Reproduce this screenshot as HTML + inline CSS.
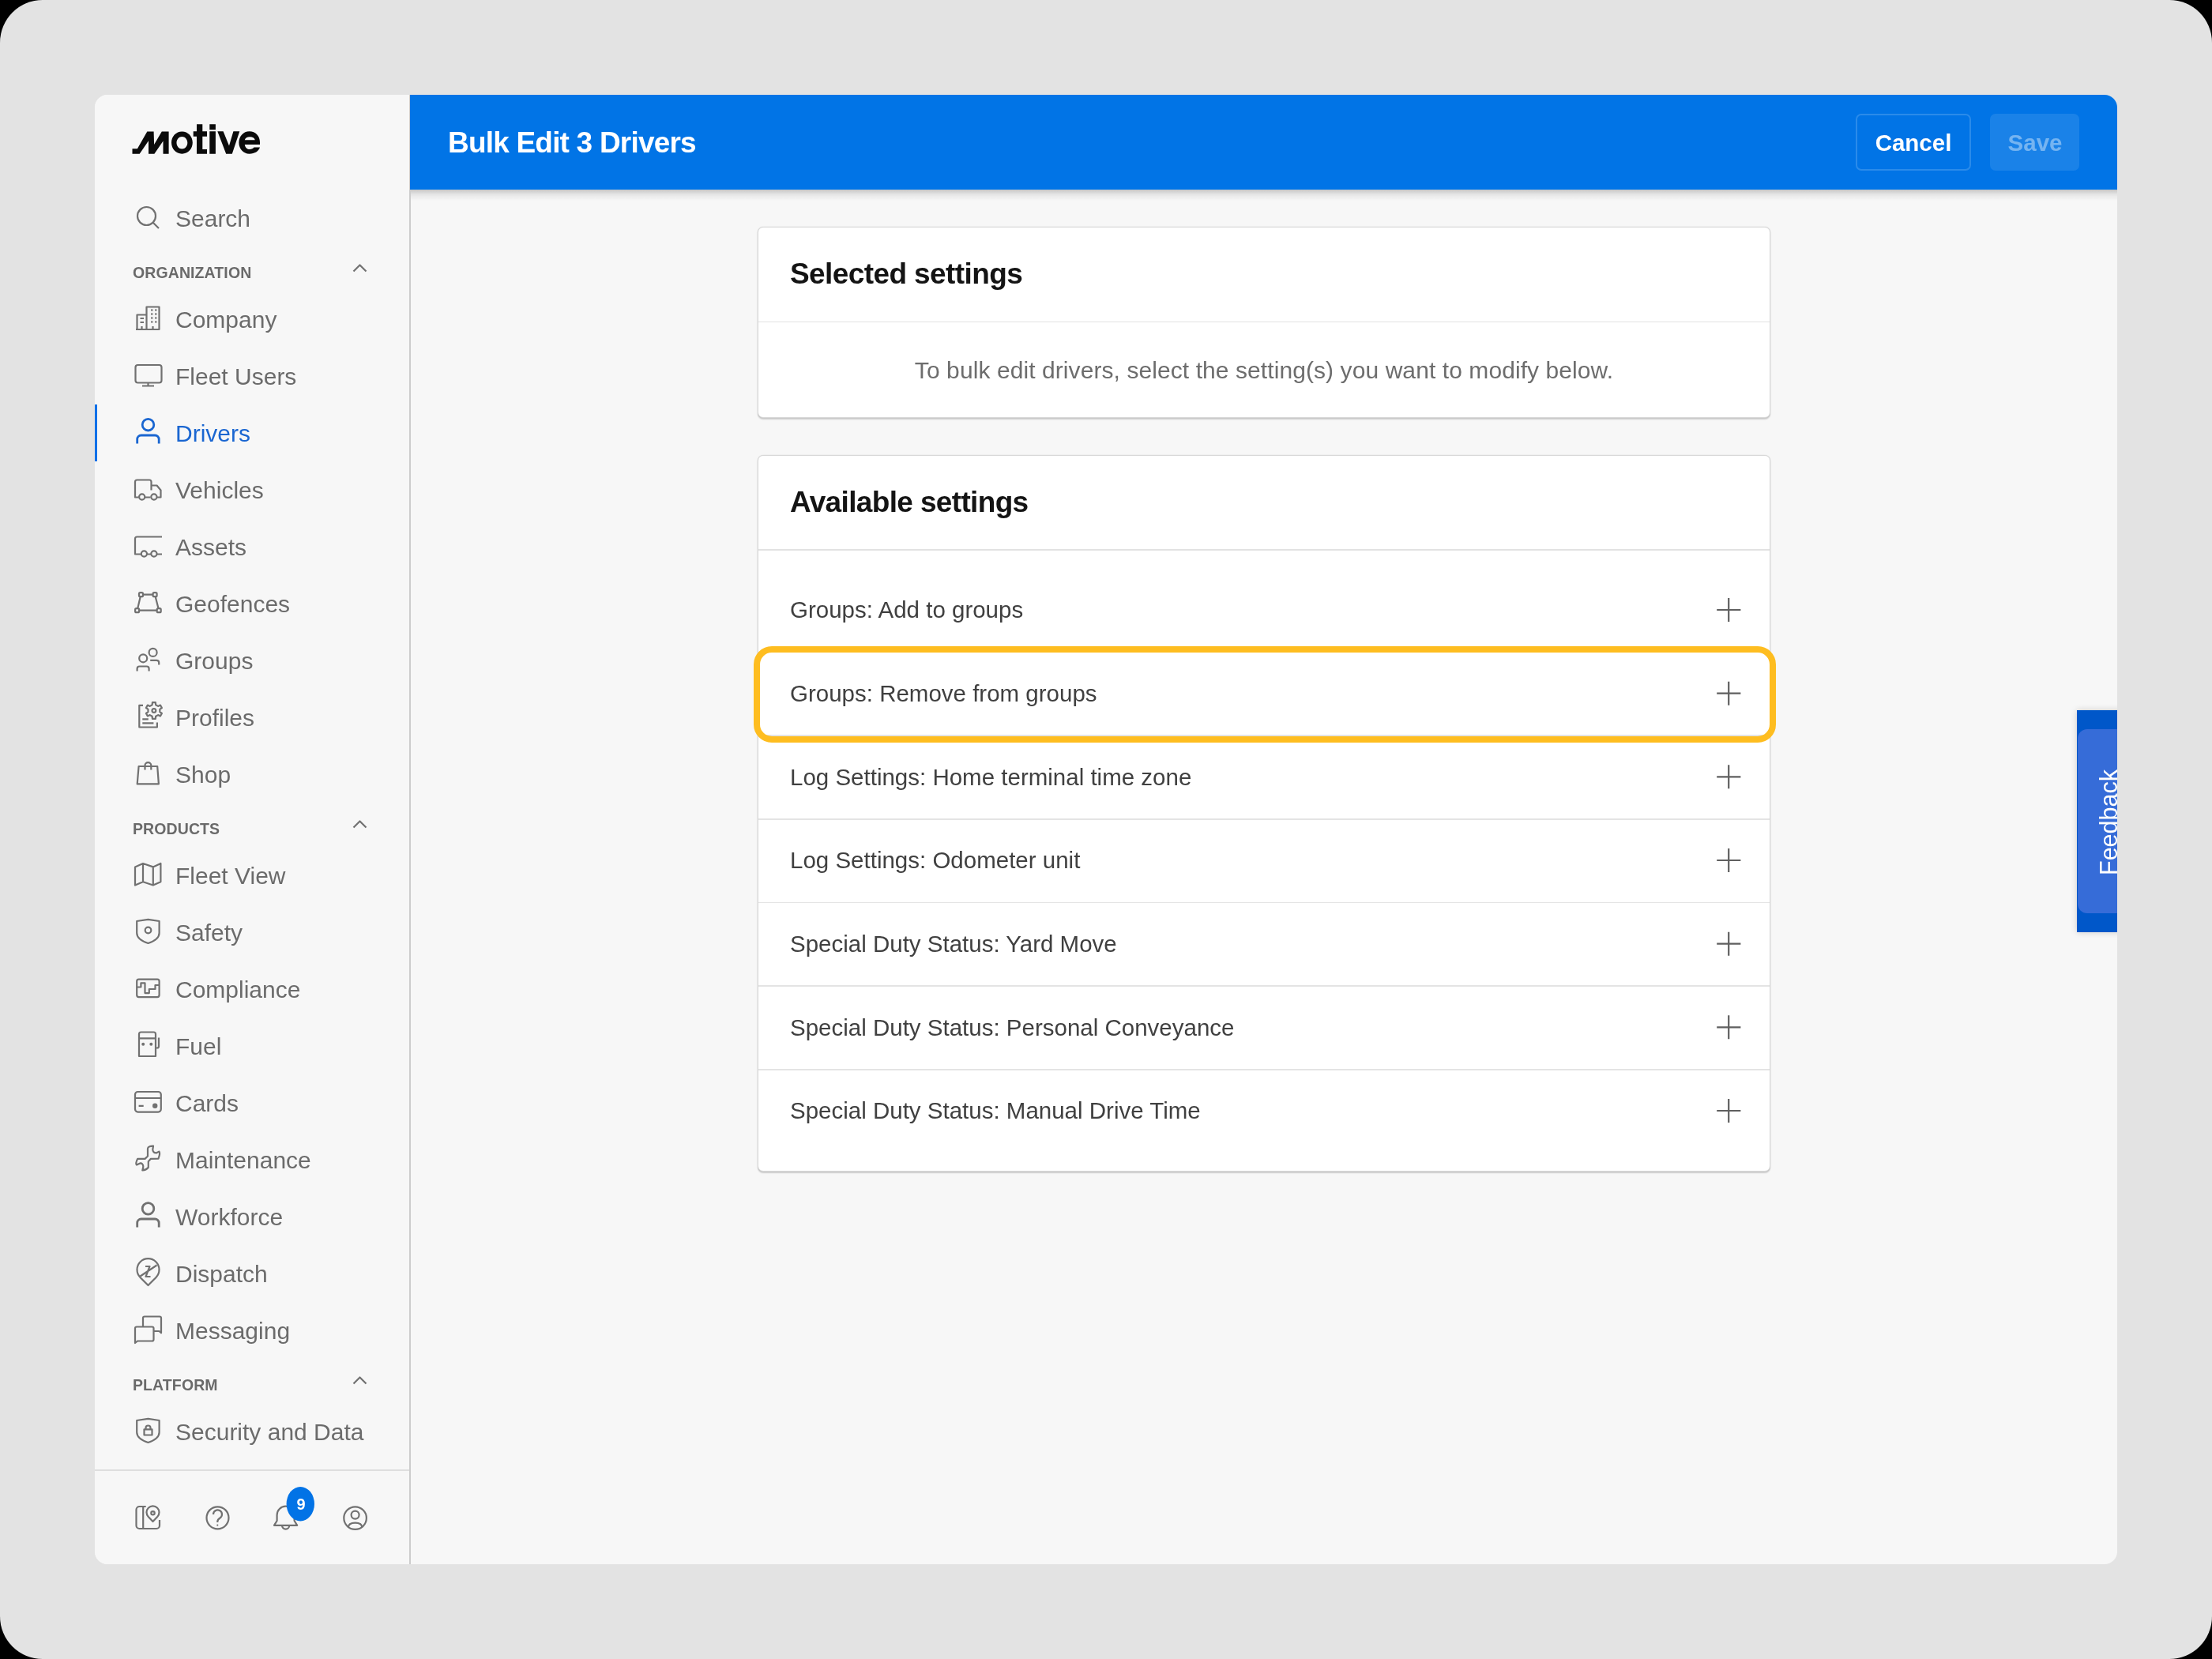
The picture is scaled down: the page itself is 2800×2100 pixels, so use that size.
<!DOCTYPE html>
<html><head><meta charset="utf-8">
<style>
html,body{margin:0;padding:0;}
body{width:2800px;height:2100px;position:relative;overflow:hidden;background:#000;font-family:"Liberation Sans",sans-serif;}
.t{position:absolute;white-space:nowrap;line-height:0;-webkit-font-smoothing:antialiased;will-change:transform;}
#frame{position:absolute;left:0;top:0;width:2800px;height:2100px;background:#e3e3e3;border-radius:54px;}
#win{position:absolute;left:120px;top:120px;width:2560px;height:1860px;border-radius:16px;overflow:hidden;background:#f7f7f7;}
#side{position:absolute;left:0;top:0;width:398px;height:1860px;background:#f7f7f7;border-right:2px solid #cdcdcd;}
#hdr{position:absolute;left:399px;top:0;width:2161px;height:120px;background:#0174e6;}
#hsh{position:absolute;left:400px;top:120px;width:2160px;height:14px;background:linear-gradient(rgba(0,0,0,0.2),rgba(0,0,0,0.07) 45%,rgba(0,0,0,0));}
.card{position:absolute;background:#fff;border:1.5px solid #d8d8d8;border-radius:7px;box-shadow:0 1.5px 1.5px rgba(0,0,0,0.17),0 0 1.5px rgba(0,0,0,0.12);box-sizing:border-box;}
</style></head><body>
<div id="frame"></div>
<div id="win">
  <div id="side"></div>
  <div style="position:absolute;left:0;top:1740px;width:398px;height:2px;background:#dedede"></div>
  <div style="position:absolute;left:0;top:392px;width:3px;height:72px;background:#0a70e8"></div>
  <div id="hdr"></div><div id="hsh"></div>
  <div style="position:absolute;left:2229px;top:24px;width:146px;height:72px;box-sizing:border-box;border:2px solid rgba(255,255,255,0.17);border-radius:7px;"></div>
  <div style="position:absolute;left:2399px;top:24px;width:113px;height:72px;background:rgba(255,255,255,0.1);border-radius:7px;"></div>
  <div style="position:absolute;left:2509px;top:779px;width:60px;height:281px;background:#0057c9;box-shadow:0 0 8px rgba(0,0,0,0.18)"></div>
  <div style="position:absolute;left:2510px;top:803px;width:60px;height:233px;background:#366cd8;border-radius:12px 0 0 12px;"></div>
</div>
<div class="card" style="left:959px;top:287px;width:1282px;height:242px;"></div>
<div style="position:absolute;left:960px;top:406.5px;width:1280px;height:1.5px;background:#e2e2e2"></div>
<div class="card" style="left:959px;top:576px;width:1282px;height:907px;"></div>
<div style="position:absolute;left:960px;top:695px;width:1280px;height:1.5px;background:#e2e2e2"></div>
<div style="position:absolute;left:960px;top:824.67px;width:1280px;height:1.5px;background:#e4e4e4"></div>
<div style="position:absolute;left:960px;top:930.34px;width:1280px;height:1.5px;background:#e4e4e4"></div>
<div style="position:absolute;left:960px;top:1036.01px;width:1280px;height:1.5px;background:#e4e4e4"></div>
<div style="position:absolute;left:960px;top:1141.68px;width:1280px;height:1.5px;background:#e4e4e4"></div>
<div style="position:absolute;left:960px;top:1247.35px;width:1280px;height:1.5px;background:#e4e4e4"></div>
<div style="position:absolute;left:960px;top:1353.02px;width:1280px;height:1.5px;background:#e4e4e4"></div>
<div style="position:absolute;left:954px;top:818px;width:1294px;height:122px;box-sizing:border-box;border:8px solid #febd20;border-radius:23px;"></div>
<svg width="2800" height="2100" style="position:absolute;left:0;top:0">
<g fill="#0b0b0b">
<path d="M167.5 194.7 V188.3 H173.9 L186.3 166.6 H194.6 L195.1 183 L204.8 166.6 H213.6 V194.7 H206.5 V178.5 L195.4 194.7 H188 V178.2 L176.7 194.7 Z"/>
<path fill-rule="evenodd" d="M230.4 166.5 C238 166.5 243.8 172.8 243.8 180.6 C243.8 188.4 238 194.7 230.4 194.7 C222.8 194.7 217 188.4 217 180.6 C217 172.8 222.8 166.5 230.4 166.5 Z M230.4 173 C226.5 173 223.5 176.4 223.5 180.75 C223.5 185.1 226.5 188.5 230.4 188.5 C234.3 188.5 237.3 185.1 237.3 180.75 C237.3 176.4 234.3 173 230.4 173 Z"/>
<path d="M249 157.3 H256.3 V166.2 H262 V172.7 H256.3 V189 H262 V194.7 H249 V172.7 H244.7 V166.2 H249 Z"/>
<path d="M265.3 157.3 H272.9 V164.3 H265.3 Z M265.3 166.2 H272.9 V194.7 H265.3 Z"/>
<path d="M275.3 166.2 H282.6 L290 184.4 L295.4 166.2 H303.3 L293.8 194.7 H286.2 Z"/>
<path fill-rule="evenodd" d="M329 183 H309.8 C310.5 187 313 189 316 189 C318.5 189 320.5 188 321.5 186.6 H329 C327.5 191.5 322.5 194.7 315.7 194.7 C308 194.7 302.4 188.5 302.4 180.5 C302.4 172.5 308 166.2 315.7 166.2 C323.5 166.2 329 172 329 180 Z M309.8 177.3 C310.5 174.5 312.8 173.3 316.3 173.3 C319.8 173.3 322.2 174.8 322.8 177.3 Z"/>
</g>
<g fill="none" stroke="#717171" stroke-width="2.2" stroke-linecap="butt" stroke-linejoin="round" stroke-width="2.6"><circle cx="185.5" cy="273.5" r="11.5"/><line x1="194" y1="282" x2="201" y2="289"/></g>
<polyline fill="none" stroke="#717171" stroke-width="2.2" stroke-linecap="butt" stroke-linejoin="round" points="447.5,343.5 455.5,335.5 463.5,343.5"/>
<polyline fill="none" stroke="#717171" stroke-width="2.2" stroke-linecap="butt" stroke-linejoin="round" points="447.5,1047.5 455.5,1039.5 463.5,1047.5"/>
<polyline fill="none" stroke="#717171" stroke-width="2.2" stroke-linecap="butt" stroke-linejoin="round" points="447.5,1751.5 455.5,1743.5 463.5,1751.5"/>
<g fill="none" stroke="#717171" stroke-width="2.2" stroke-linecap="butt" stroke-linejoin="round" stroke-width="2.5" stroke-linejoin="miter"><path d="M173.5 417 V398.5 H185.5 M185.5 417 V388.5 H201.5 V417 H172"/><path d="M191 392.5 h2.5 M196 392.5 h2.5 M191 397.5 h2.5 M196 397.5 h2.5 M191 402.5 h2.5 M196 402.5 h2.5 M191 407.5 h2.5 M196 407.5 h2.5 M177.5 403 h4.5 M177.5 408 h4.5 M179.5 413 v4 M193.5 413 v4"/></g>
<g fill="none" stroke="#717171" stroke-width="2.2" stroke-linecap="butt" stroke-linejoin="round" stroke-width="2.2"><rect x="171.5" y="462" width="33" height="22.5" rx="3"/><path d="M187.5 484.5 v4 M180 488.5 h15"/></g>
<g fill="none" stroke="#1a66d1" stroke-width="2.8"><circle cx="187.5" cy="537.7" r="7.3"/><path d="M173.7 561.6 V556 a5 5 0 0 1 5 -5 H196.2 a5 5 0 0 1 5 5 V561.6"/></g>
<g fill="none" stroke="#717171" stroke-width="2.2" stroke-linecap="butt" stroke-linejoin="round" stroke-width="2.2"><path d="M175.5 629.5 H171 V610 a2.5 2.5 0 0 1 2.5 -2.5 H189 a2.5 2.5 0 0 1 2.5 2.5 V620.5 M191.5 614.5 H198.5 L203.5 620.5 V629.5 H199 M184 629.5 H190.5"/><circle cx="179.7" cy="629" r="3.6"/><circle cx="194.9" cy="629" r="3.6"/></g>
<g fill="none" stroke="#717171" stroke-width="2.2" stroke-linecap="butt" stroke-linejoin="round" stroke-width="2.2"><path d="M205 679.5 H173.5 a2.5 2.5 0 0 0 -2.5 2.5 V701.5 H178.5 M186.5 701.5 H191 M198.5 701.5 H205"/><circle cx="182.4" cy="701" r="3.6"/><circle cx="194.9" cy="701" r="3.6"/></g>
<g fill="none" stroke="#717171" stroke-width="2.2" stroke-linecap="butt" stroke-linejoin="round" stroke-width="2"><path d="M178.4 752.6 H196 L201.2 772.7 H173.6 Z"/><rect x="176" y="750.2" width="5" height="5" rx="1.5" fill="#f7f7f7"/><rect x="193.6" y="750.2" width="5" height="5" rx="1.5" fill="#f7f7f7"/><rect x="171.1" y="770.2" width="5" height="5" rx="1.5" fill="#f7f7f7"/><rect x="198.7" y="770.2" width="5" height="5" rx="1.5" fill="#f7f7f7"/></g>
<g fill="none" stroke="#717171" stroke-width="2.2" stroke-linecap="butt" stroke-linejoin="round" stroke-width="2.3"><circle cx="181.2" cy="833.3" r="5"/><circle cx="193.6" cy="825.9" r="5"/><path d="M173.6 849.5 V846.5 a3 3 0 0 1 3 -3 H185.6 a3 3 0 0 1 3 3 V849.5 M190.2 835.8 H198.2 a3 3 0 0 1 3 3 V841.6"/></g>
<g fill="none" stroke="#717171" stroke-width="2.2" stroke-linecap="butt" stroke-linejoin="round" stroke-width="2.2" stroke-linejoin="miter"><path d="M181 892.8 H176.3 V920.5 H198.9 V914.5 M180.3 910.3 H187.8 M180.3 915.4 H194.4"/><path d="M192.65 892.24 L192.94 889.08 L196.86 889.08 L197.15 892.24 L200.06 893.92 L202.94 892.59 L204.90 895.99 L202.31 897.81 L202.31 901.19 L204.90 903.01 L202.94 906.41 L200.06 905.08 L197.15 906.76 L196.86 909.92 L192.94 909.92 L192.65 906.76 L189.74 905.08 L186.86 906.41 L184.90 903.01 L187.49 901.19 L187.49 897.81 L184.90 895.99 L186.86 892.59 L189.74 893.92 Z"/><circle cx="194.9" cy="899.5" r="2.4"/></g>
<g fill="none" stroke="#717171" stroke-width="2.2" stroke-linecap="butt" stroke-linejoin="round" stroke-width="2.2"><path d="M175.6 970 H199.2 L200.9 992.4 H173.7 Z"/><path d="M183.5 974.4 V969 a3.9 3.9 0 0 1 7.8 0 V974.4"/></g>
<g fill="none" stroke="#717171" stroke-width="2.2" stroke-linecap="butt" stroke-linejoin="round" stroke-width="2"><path d="M171 1097.4 L181 1093 L193.8 1097.4 L203.4 1093 V1116.2 L193.8 1120.5 L181 1116.2 L171 1120.5 Z M181 1093 V1116.2 M193.8 1097.4 V1120.5"/></g>
<g fill="none" stroke="#717171" stroke-width="2.2" stroke-linecap="butt" stroke-linejoin="round" stroke-width="2.2"><path d="M187.5 1163.8 L173.2 1166 V1181 C173.2 1187 180 1191.5 187.5 1194 C195 1191.5 201.6 1187 201.6 1181 V1166 Z"/><circle cx="187.5" cy="1177.5" r="3.8"/></g>
<g fill="none" stroke="#717171" stroke-width="2.2" stroke-linecap="butt" stroke-linejoin="round" stroke-width="2.2" stroke-linejoin="miter"><rect x="173.2" y="1239.7" width="28.4" height="22.4" rx="2.5"/><path d="M173.7 1249.5 H178.4 V1244.4 H183.5 V1257.1 H188.8 V1252 H196.5 V1247 H201.2"/></g>
<g fill="none" stroke="#717171" stroke-width="2.2" stroke-linecap="butt" stroke-linejoin="round" stroke-width="2.2" stroke-linejoin="miter"><path d="M176 1337 V1309 a2.5 2.5 0 0 1 2.5 -2.5 H194.5 a2.5 2.5 0 0 1 2.5 2.5 V1337 Z M176 1314.3 H197 M197 1326.5 H199 a2 2 0 0 0 2 -2 V1313.5"/><circle cx="181.2" cy="1321.8" r="0.9" fill="#717171"/><circle cx="191.3" cy="1321.8" r="0.9" fill="#717171"/></g>
<g fill="none" stroke="#717171" stroke-width="2.2" stroke-linecap="butt" stroke-linejoin="round" stroke-width="2.2"><rect x="171" y="1382" width="32.8" height="25.6" rx="3.5"/><path d="M171 1390 H203.8 M175.6 1399.8 H181.7"/><circle cx="196.2" cy="1399.8" r="3.2" fill="#717171" stroke="none"/></g>
<g fill="none" stroke="#717171" stroke-width="2.2" stroke-linecap="butt" stroke-linejoin="round" stroke-width="2.2"><path d="M187 1454 C187 1451.5 191 1450.5 194 1450.7 L193.3 1455 C193.3 1458 195 1459.7 198.3 1459.3 L201.3 1457.6 C202.6 1459 202.3 1462 200.5 1466.6 L190.7 1466.9 L187.8 1470.2 L187.8 1477.8 C186 1480 183 1481.3 180.3 1481.4 L181.3 1477 C181.5 1474 179.5 1472.2 177.4 1472.4 L173 1474.6 C172 1473.5 172.5 1470 174.1 1466.9 L183.5 1466.9 L187 1463.5 Z"/></g>
<g fill="none" stroke="#717171" stroke-width="2.8"><circle cx="187.5" cy="1529.9" r="7.3"/><path d="M173.7 1553.4 V1548 a5 5 0 0 1 5 -5 H196.2 a5 5 0 0 1 5 5 V1553.4"/></g>
<g fill="none" stroke="#717171" stroke-width="2.2" stroke-linecap="butt" stroke-linejoin="round" stroke-width="2.2"><path d="M187.5 1627 L177.5 1617 A14 14 0 1 1 197.5 1617 Z"/><path d="M177.5 1615.5 L198.5 1601.5 M184 1603 H189.5 L184.5 1616 H190.5"/></g>
<g fill="none" stroke="#717171" stroke-width="2.2" stroke-linecap="butt" stroke-linejoin="round" stroke-width="2.2" stroke-linejoin="miter"><path d="M181 1679.5 V1668.5 a2 2 0 0 1 2 -2 H202 a2 2 0 0 1 2 2 V1687.3 L201.5 1685 H194.5"/><path d="M171 1700 V1681.5 a2 2 0 0 1 2 -2 H192.5 a2 2 0 0 1 2 2 V1695.5 a2 2 0 0 1 -2 2 H174 Z"/></g>
<g fill="none" stroke="#717171" stroke-width="2.2" stroke-linecap="butt" stroke-linejoin="round" stroke-width="2.2"><path d="M187.5 1795.8 L173.2 1798 V1813 C173.2 1819 180 1823.5 187.5 1826 C195 1823.5 201.6 1819 201.6 1813 V1798 Z"/><rect x="182.5" y="1809.3" width="10" height="7.2"/><path d="M184.5 1809.3 V1807.5 a3 3 0 0 1 6 0 V1809.3"/></g>
<g fill="none" stroke="#717171" stroke-width="2.2" stroke-linecap="butt" stroke-linejoin="round" stroke-width="2.2"><path d="M184.7 1907 H176.5 a4 4 0 0 0 -4 4 V1931 a4 4 0 0 0 4 4 H198 a4 4 0 0 0 4 -4 V1924 M181.2 1907 V1935"/><path d="M193.5 1926 L187.8 1920 A8 8 0 1 1 199.2 1920 Z"/><circle cx="193.5" cy="1915.3" r="2.2"/></g>
<g fill="none" stroke="#717171" stroke-width="2.2" stroke-linecap="butt" stroke-linejoin="round" stroke-width="2.2"><circle cx="275.5" cy="1921.3" r="14"/><path d="M270 1917 a5.5 5.5 0 1 1 8.5 4.5 c-2 1.3 -3.2 2.3 -3.2 4.5 V1927"/><circle cx="275.3" cy="1930.6" r="1.1" fill="#717171" stroke="none"/></g>
<g fill="none" stroke="#717171" stroke-width="2.2" stroke-linecap="butt" stroke-linejoin="round" stroke-width="2.2"><path d="M361.6 1906.7 a11 11 0 0 0 -11 11 V1925 L347 1930.8 H376.2 L372.6 1925 V1917.7 a11 11 0 0 0 -11 -11 Z"/><path d="M357 1931 a4.6 4.6 0 0 0 9.2 0"/></g>
<g fill="none" stroke="#717171" stroke-width="2.2" stroke-linecap="butt" stroke-linejoin="round" stroke-width="2.2"><circle cx="449.6" cy="1921.6" r="14.3"/><circle cx="449.6" cy="1917.6" r="5"/><path d="M440.8 1933.5 C441 1929.5 443.5 1927.6 449.6 1927.6 C455.7 1927.6 458.2 1929.5 458.4 1933.5"/></g>
<path d="M2173.2 772.00 H2203.4 M2188.2 757.00 V787.00" stroke="#5f5f5f" stroke-width="2.2" fill="none"/>
<path d="M2173.2 877.67 H2203.4 M2188.2 862.67 V892.67" stroke="#5f5f5f" stroke-width="2.2" fill="none"/>
<path d="M2173.2 983.34 H2203.4 M2188.2 968.34 V998.34" stroke="#5f5f5f" stroke-width="2.2" fill="none"/>
<path d="M2173.2 1089.01 H2203.4 M2188.2 1074.01 V1104.01" stroke="#5f5f5f" stroke-width="2.2" fill="none"/>
<path d="M2173.2 1194.68 H2203.4 M2188.2 1179.68 V1209.68" stroke="#5f5f5f" stroke-width="2.2" fill="none"/>
<path d="M2173.2 1300.35 H2203.4 M2188.2 1285.35 V1315.35" stroke="#5f5f5f" stroke-width="2.2" fill="none"/>
<path d="M2173.2 1406.02 H2203.4 M2188.2 1391.02 V1421.02" stroke="#5f5f5f" stroke-width="2.2" fill="none"/>
<ellipse cx="380.3" cy="1903.7" rx="17.7" ry="21.7" fill="#0273e6"/>
</svg>
<div class="t" style="left:222px;top:276.81px;font-size:30px;color:#6b6b6b;font-weight:400;letter-spacing:0px;">Search</div>
<div class="t" style="left:168px;top:344.84px;font-size:19.5px;color:#6a6a6a;font-weight:700;letter-spacing:0.1px;">ORGANIZATION</div>
<div class="t" style="left:222px;top:404.81px;font-size:30px;color:#6b6b6b;font-weight:400;letter-spacing:0px;">Company</div>
<div class="t" style="left:222px;top:476.81px;font-size:30px;color:#6b6b6b;font-weight:400;letter-spacing:0px;">Fleet Users</div>
<div class="t" style="left:222px;top:548.81px;font-size:30px;color:#1a66d1;font-weight:400;letter-spacing:0px;">Drivers</div>
<div class="t" style="left:222px;top:620.81px;font-size:30px;color:#6b6b6b;font-weight:400;letter-spacing:0px;">Vehicles</div>
<div class="t" style="left:222px;top:692.81px;font-size:30px;color:#6b6b6b;font-weight:400;letter-spacing:0px;">Assets</div>
<div class="t" style="left:222px;top:764.81px;font-size:30px;color:#6b6b6b;font-weight:400;letter-spacing:0px;">Geofences</div>
<div class="t" style="left:222px;top:836.81px;font-size:30px;color:#6b6b6b;font-weight:400;letter-spacing:0px;">Groups</div>
<div class="t" style="left:222px;top:908.81px;font-size:30px;color:#6b6b6b;font-weight:400;letter-spacing:0px;">Profiles</div>
<div class="t" style="left:222px;top:980.81px;font-size:30px;color:#6b6b6b;font-weight:400;letter-spacing:0px;">Shop</div>
<div class="t" style="left:168px;top:1048.84px;font-size:19.5px;color:#6a6a6a;font-weight:700;letter-spacing:0.1px;">PRODUCTS</div>
<div class="t" style="left:222px;top:1108.81px;font-size:30px;color:#6b6b6b;font-weight:400;letter-spacing:0px;">Fleet View</div>
<div class="t" style="left:222px;top:1180.81px;font-size:30px;color:#6b6b6b;font-weight:400;letter-spacing:0px;">Safety</div>
<div class="t" style="left:222px;top:1252.81px;font-size:30px;color:#6b6b6b;font-weight:400;letter-spacing:0px;">Compliance</div>
<div class="t" style="left:222px;top:1324.81px;font-size:30px;color:#6b6b6b;font-weight:400;letter-spacing:0px;">Fuel</div>
<div class="t" style="left:222px;top:1396.81px;font-size:30px;color:#6b6b6b;font-weight:400;letter-spacing:0px;">Cards</div>
<div class="t" style="left:222px;top:1468.81px;font-size:30px;color:#6b6b6b;font-weight:400;letter-spacing:0px;">Maintenance</div>
<div class="t" style="left:222px;top:1540.81px;font-size:30px;color:#6b6b6b;font-weight:400;letter-spacing:0px;">Workforce</div>
<div class="t" style="left:222px;top:1612.81px;font-size:30px;color:#6b6b6b;font-weight:400;letter-spacing:0px;">Dispatch</div>
<div class="t" style="left:222px;top:1684.81px;font-size:30px;color:#6b6b6b;font-weight:400;letter-spacing:0px;">Messaging</div>
<div class="t" style="left:168px;top:1752.84px;font-size:19.5px;color:#6a6a6a;font-weight:700;letter-spacing:0.1px;">PLATFORM</div>
<div class="t" style="left:222px;top:1812.81px;font-size:30px;color:#6b6b6b;font-weight:400;letter-spacing:0px;">Security and Data</div>
<div class="t" style="left:567px;top:180.68px;font-size:37px;color:#ffffff;font-weight:700;letter-spacing:-0.8px;">Bulk Edit 3 Drivers</div>
<div class="t" style="left:1421.5px;width:2000px;text-align:center;top:181.08px;font-size:29.5px;color:#ffffff;font-weight:700;letter-spacing:0px;">Cancel</div>
<div class="t" style="left:1575.5px;width:2000px;text-align:center;top:181.08px;font-size:29.5px;color:rgba(255,255,255,0.4);font-weight:700;letter-spacing:0px;">Save</div>
<div class="t" style="left:1000px;top:346.68px;font-size:37px;color:#141414;font-weight:700;letter-spacing:-0.6px;">Selected settings</div>
<div class="t" style="left:600px;width:2000px;text-align:center;top:468.50px;font-size:30px;color:#6d6d6d;font-weight:400;letter-spacing:0.08px;">To bulk edit drivers, select the setting(s) you want to modify below.</div>
<div class="t" style="left:1000px;top:635.88px;font-size:37px;color:#141414;font-weight:700;letter-spacing:-0.65px;">Available settings</div>
<div class="t" style="left:1000px;top:772.38px;font-size:29.5px;color:#404040;font-weight:400;letter-spacing:0px;">Groups: Add to groups</div>
<div class="t" style="left:1000px;top:878.05px;font-size:29.5px;color:#404040;font-weight:400;letter-spacing:0px;">Groups: Remove from groups</div>
<div class="t" style="left:1000px;top:983.72px;font-size:29.5px;color:#404040;font-weight:400;letter-spacing:0px;">Log Settings: Home terminal time zone</div>
<div class="t" style="left:1000px;top:1089.39px;font-size:29.5px;color:#404040;font-weight:400;letter-spacing:0px;">Log Settings: Odometer unit</div>
<div class="t" style="left:1000px;top:1195.06px;font-size:29.5px;color:#404040;font-weight:400;letter-spacing:0px;">Special Duty Status: Yard Move</div>
<div class="t" style="left:1000px;top:1300.73px;font-size:29.5px;color:#404040;font-weight:400;letter-spacing:0px;">Special Duty Status: Personal Conveyance</div>
<div class="t" style="left:1000px;top:1406.40px;font-size:29.5px;color:#404040;font-weight:400;letter-spacing:0px;">Special Duty Status: Manual Drive Time</div>
<div class="t" style="left:2669px;top:1040.5px;font-size:30.5px;color:#fff;transform:translate(-50%,-50%) rotate(-90deg);transform-origin:center;line-height:28px;">Feedback</div>
<div class="t" style="left:-619px;width:2000px;text-align:center;top:1904.27px;font-size:20px;color:#fff;font-weight:700;letter-spacing:0px;">9</div>
</body></html>
